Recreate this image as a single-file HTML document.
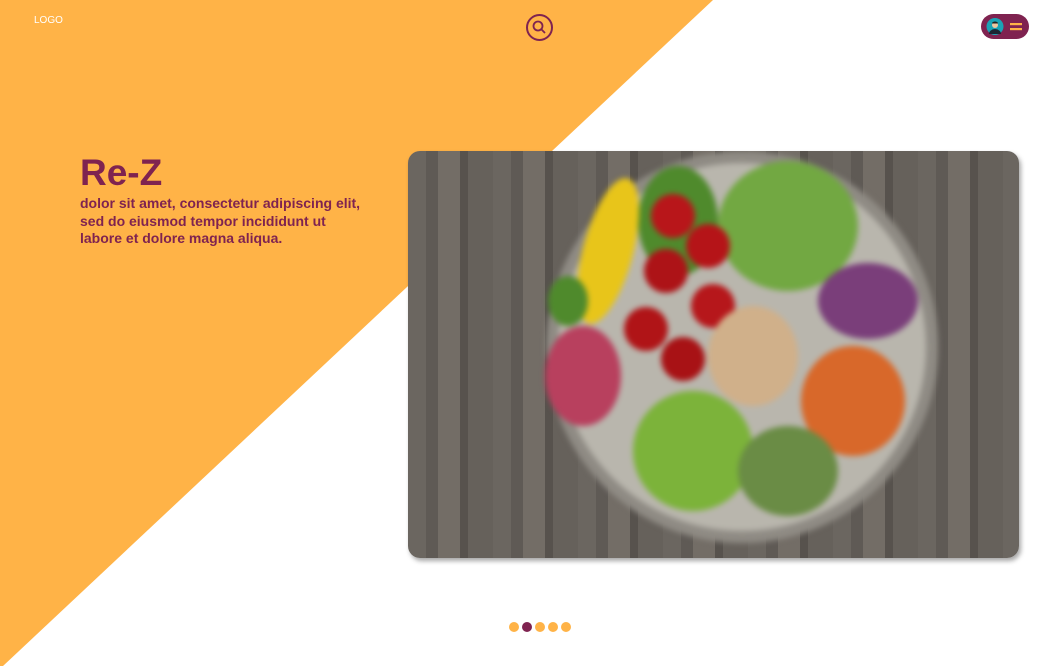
<!DOCTYPE html>
<html><head><meta charset="utf-8"><style>
html,body{margin:0;padding:0;width:1042px;height:666px;overflow:hidden;background:#fff;font-family:"Liberation Sans",sans-serif;}
.tri{position:absolute;left:0;top:0;width:1042px;height:666px;}
.logo{position:absolute;left:34px;top:15px;color:#fff;font-size:10px;}
.search{position:absolute;left:526px;top:14px;width:27px;height:27px;border:2px solid #7f2350;border-radius:50%;box-sizing:border-box;}
.pill{position:absolute;left:981px;top:14px;width:48px;height:25px;border-radius:13px;background:#7f2350;}
h1{position:absolute;left:80px;top:152px;margin:0;font-size:37px;font-weight:bold;color:#7f2350;}
.desc{position:absolute;left:80px;top:195px;margin:0;font-size:14px;line-height:17.5px;font-weight:bold;color:#7f2350;}
.photo{position:absolute;left:408px;top:151px;width:611px;height:407px;border-radius:12px;overflow:hidden;box-shadow:2px 3px 5px rgba(0,0,0,.35);
background:repeating-linear-gradient(90deg,#6b6660 0 18px,#5f5a55 18px 30px,#736d66 30px 52px,#57524d 52px 60px,#66615b 60px 85px);}
.photo svg{filter:blur(3px);}
.dots{position:absolute;top:622px;left:509px;display:flex;}
.dots span{display:block;width:10px;height:10px;border-radius:50%;background:#ffb347;margin-right:3px;}
</style></head><body>
<svg class="tri" viewBox="0 0 1042 666"><polygon points="0,0 713,0 3,666 0,666" fill="#ffb347"/></svg>
<div class="logo">LOGO</div>
<div class="search"><svg width="23" height="23" viewBox="0 0 23 23" style="position:absolute;left:0;top:0"><circle cx="10" cy="10" r="4.5" fill="none" stroke="#7f2350" stroke-width="1.8"/><line x1="13.3" y1="13.3" x2="17" y2="17" stroke="#7f2350" stroke-width="1.8"/></svg></div>
<div class="pill"><svg width="48" height="25" viewBox="0 0 48 25"><circle cx="14" cy="12.5" r="8.5" fill="#1ba3b5"/><circle cx="14" cy="11" r="3" fill="#f1c7a0"/><path d="M14 7.5a3 2 0 0 1 3 2h-6a3 2 0 0 1 3-2z" fill="#222"/><path d="M8 20a6 5 0 0 1 12 0z" fill="#1c2533"/><rect x="29" y="9" width="12" height="2.2" fill="#ffb347"/><rect x="29" y="14" width="12" height="2.2" fill="#ffb347"/></svg></div>
<h1>Re-Z</h1>
<p class="desc">dolor sit amet, consectetur adipiscing elit,<br>sed do eiusmod tempor incididunt ut<br>labore et dolore magna aliqua.</p>
<div class="photo"><svg width="611" height="407" viewBox="0 0 611 407">
<circle cx="334" cy="196" r="196" fill="#8f8b84"/>
<circle cx="334" cy="196" r="184" fill="#b9b6ad"/>
<ellipse cx="380" cy="75" rx="70" ry="65" fill="#72a842"/>
<ellipse cx="270" cy="70" rx="40" ry="55" fill="#4f8a2c"/>
<ellipse cx="200" cy="100" rx="25" ry="75" fill="#e8c51a" transform="rotate(15 200 100)"/>
<circle cx="265" cy="65" r="22" fill="#b8161a"/><circle cx="300" cy="95" r="22" fill="#b51418"/>
<circle cx="258" cy="120" r="22" fill="#ad1317"/><circle cx="305" cy="155" r="22" fill="#b6171b"/>
<circle cx="238" cy="178" r="22" fill="#b01417"/><circle cx="275" cy="208" r="22" fill="#a81215"/>
<ellipse cx="460" cy="150" rx="50" ry="38" fill="#7a3e7a"/>
<ellipse cx="345" cy="205" rx="45" ry="50" fill="#d0b08a"/>
<ellipse cx="445" cy="250" rx="52" ry="55" fill="#d8682a"/>
<ellipse cx="175" cy="225" rx="38" ry="50" fill="#b8405e"/>
<ellipse cx="285" cy="300" rx="60" ry="60" fill="#7cb33a"/>
<ellipse cx="380" cy="320" rx="50" ry="45" fill="#6a8c45"/>
<ellipse cx="160" cy="150" rx="20" ry="25" fill="#4f8a2c"/>
</svg></div>
<div class="dots"><span></span><span style="background:#7f2350"></span><span></span><span></span><span></span></div>
</body></html>
